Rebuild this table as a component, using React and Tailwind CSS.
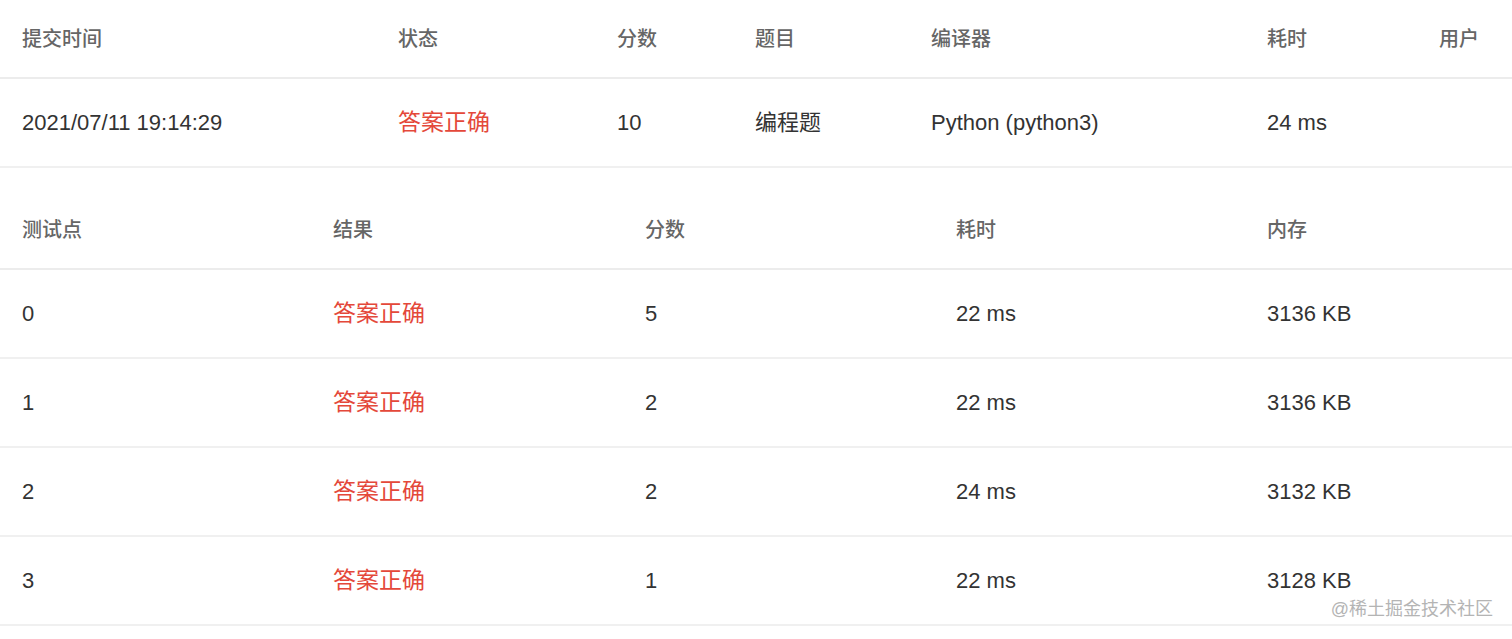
import React from "react";

const font = { fontFamily: '"Liberation Sans", "Noto Sans CJK SC", sans-serif' };

const w1 = ["w-[376px]", "w-[219px]", "w-[138px]", "w-[176px]", "w-[336px]", "w-[172px]", "w-[95px]"];
const h1 = ["提交时间", "状态", "分数", "题目", "编译器", "耗时", "用户"];

const w2 = ["w-[311px]", "w-[312px]", "w-[311px]", "w-[311px]", "w-[267px]"];
const h2 = ["测试点", "结果", "分数", "耗时", "内存"];
const rows = [
  ["0", "5", "22 ms", "3136 KB"],
  ["1", "2", "22 ms", "3136 KB"],
  ["2", "2", "24 ms", "3132 KB"],
  ["3", "1", "22 ms", "3128 KB"],
];

function HeadCell({ w, children }) {
  return (
    <div className={`${w} shrink-0 pl-[22px] text-[20px] font-medium text-[#666666]`}>{children}</div>
  );
}

function Cell({ w, children, red }) {
  return (
    <div
      className={`${w} shrink-0 pl-[22px] ${red ? "text-[23px] text-[#e4483a]" : "text-[22px] text-[#333333]"}`}
    >
      {children}
    </div>
  );
}

export default function App() {
  return (
    <div className="relative w-[1512px] h-[639px] overflow-hidden bg-white" style={font}>
      {/* Submission table */}
      <div className="flex flex-col">
        <div className="flex h-[79px] items-center border-b-2 border-[#ececec]">
          {h1.map((h, i) => (
            <HeadCell key={i} w={w1[i]}>{h}</HeadCell>
          ))}
        </div>
        <div className="flex h-[89px] items-center border-b-2 border-[#f0f0f0]">
          <Cell w={w1[0]}>2021/07/11 19:14:29</Cell>
          <Cell w={w1[1]} red>答案正确</Cell>
          <Cell w={w1[2]}>10</Cell>
          <Cell w={w1[3]}>编程题</Cell>
          <Cell w={w1[4]}>Python (python3)</Cell>
          <Cell w={w1[5]}>24 ms</Cell>
          <Cell w={w1[6]}></Cell>
        </div>
      </div>

      {/* Test case table */}
      <div className="mt-[23px] flex flex-col">
        <div className="flex h-[79px] items-center border-b-2 border-[#ececec]">
          {h2.map((h, i) => (
            <HeadCell key={i} w={w2[i]}>{h}</HeadCell>
          ))}
        </div>
        {rows.map((r, i) => (
          <div key={i} className="flex h-[89px] items-center border-b-2 border-[#f0f0f0]">
            <Cell w={w2[0]}>{r[0]}</Cell>
            <Cell w={w2[1]} red>答案正确</Cell>
            <Cell w={w2[2]}>{r[1]}</Cell>
            <Cell w={w2[3]}>{r[2]}</Cell>
            <Cell w={w2[4]}>{r[3]}</Cell>
          </div>
        ))}
      </div>

      <div className="absolute right-[19px] top-[596px] text-[18px] leading-[26px] text-[#b4b4b4]">
        @稀土掘金技术社区
      </div>
    </div>
  );
}
